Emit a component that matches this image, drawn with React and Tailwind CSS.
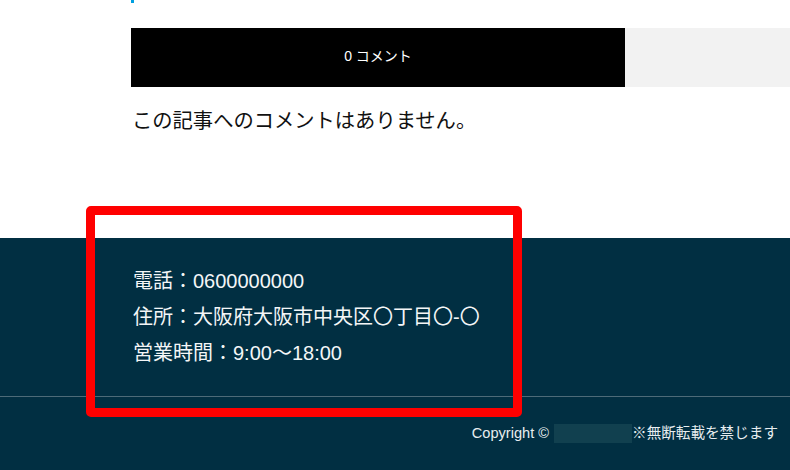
export default function App() {
  const font = { fontFamily: '"Liberation Sans", "Noto Sans CJK JP", sans-serif' };
  return (
    <div className="relative w-[790px] h-[470px] overflow-hidden bg-white" style={font}>
      <div className="h-[238px] pl-[131px] flex flex-col">
        <div className="w-[3px] h-[3px] bg-[#00a0e0]" />
        <div className="mt-[25px] flex h-[59px]">
          <div className="w-[494px] bg-black text-white text-[14px] flex items-center justify-center pb-[2px]">0 コメント</div>
          <div className="flex-1 bg-[#f2f2f2]" />
        </div>
        <p className="mt-[20px] pl-[1px] text-[20.3px] leading-[28px] text-[#111]">この記事へのコメントはありません。</p>
      </div>
      <div className="h-[232px] bg-[#012f42] text-white flex flex-col">
        <div className="h-[158px] pl-[133px] pt-[25px] text-[20px] leading-[36px] text-[#f4f6f7]">
          <p>電話：0600000000</p>
          <p>住所：大阪府大阪市中央区〇丁目〇-〇</p>
          <p>営業時間：9:00〜18:00</p>
        </div>
        <div className="h-px bg-[#4d6b78]" />
        <div className="flex justify-end items-center pr-[12px] pt-[26px] text-[14.6px] text-[#e8eef0]">
          <span>Copyright ©</span>
          <span className="inline-block w-[78px] h-[19px] ml-[5px] bg-[#11404f]" />
          <span>※無断転載を禁じます</span>
        </div>
      </div>
      <div className="absolute left-[86px] top-[206px] w-[436px] h-[211px] border-[9px] border-[#ff0000] rounded-[5px]" />
    </div>
  );
}
